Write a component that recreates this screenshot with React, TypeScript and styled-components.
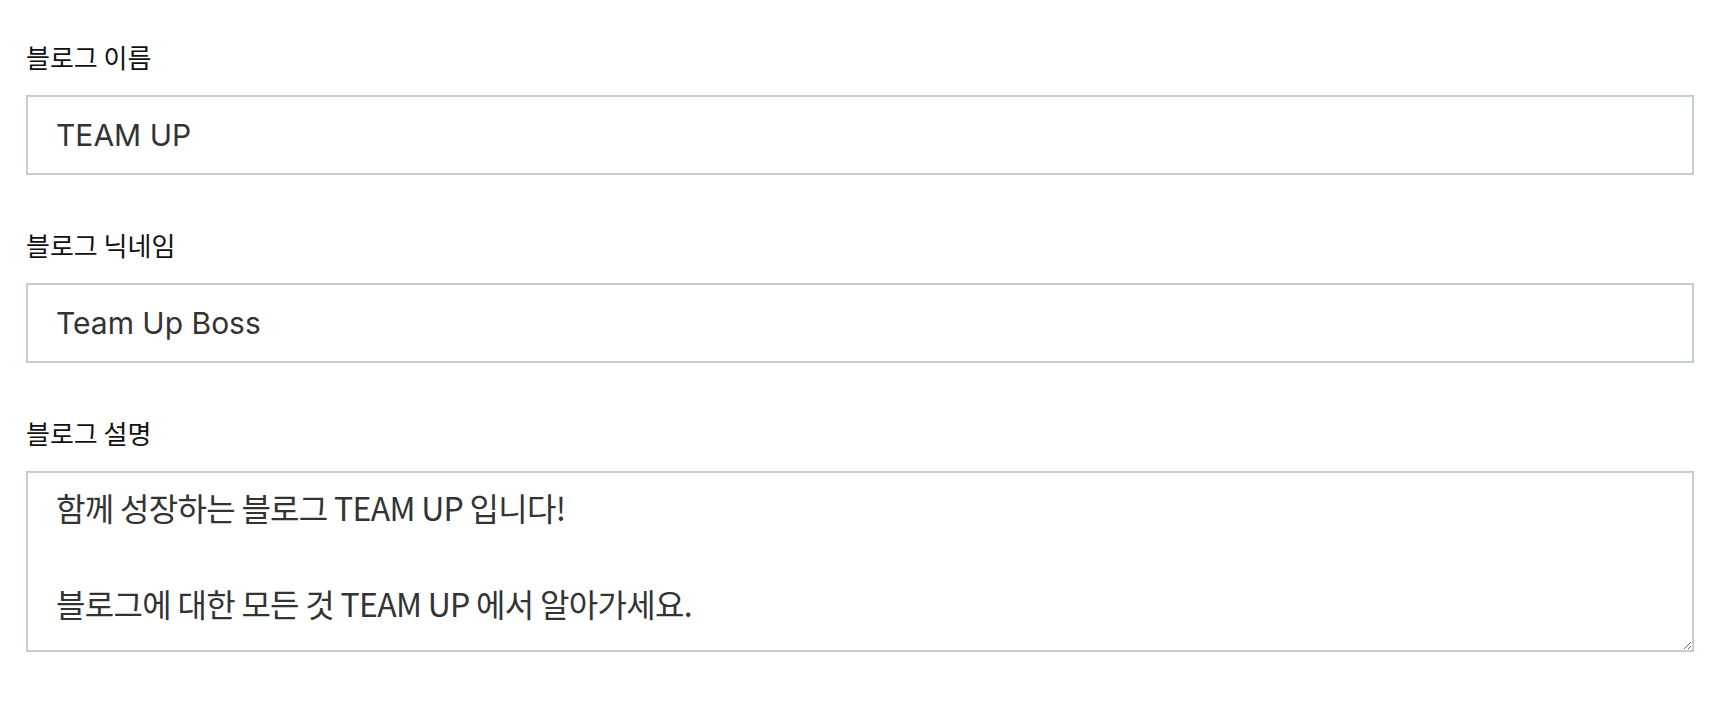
import styled, { createGlobalStyle } from "styled-components";

const GlobalStyle = createGlobalStyle`
  html, body {
    margin: 0;
    padding: 0;
    background: #ffffff;
  }
  body {
    font-family: "Noto Sans CJK KR", "Noto Sans", sans-serif;
  }
  * {
    box-sizing: border-box;
  }
`;

const Form = styled.form`
  display: flex;
  flex-direction: column;
  gap: 52px;
  padding: 39px 40px 40px 26px;
`;

const Field = styled.div`
  display: flex;
  flex-direction: column;
  gap: 20px;
`;

const Label = styled.label`
  font-family: "Noto Sans CJK KR", sans-serif;
  font-size: 26px;
  line-height: 36px;
  color: #111111;
`;

const TextInput = styled.input`
  width: 100%;
  height: 80px;
  padding: 0 28px;
  border: 2px solid #c6ccd7;
  border-radius: 0;
  outline: none;
  font-family: Inter, "Noto Sans CJK KR", sans-serif;
  font-size: 30px;
  color: #333333;
  background: #ffffff;
`;

const TextArea = styled.textarea`
  display: block;
  width: 100%;
  padding: 10px 28px 23px;
  border: 2px solid #c6ccd7;
  border-radius: 0;
  outline: none;
  font-family: "Noto Sans CJK KR", sans-serif;
  font-size: 32px;
  line-height: 48px;
  letter-spacing: -0.7px;
  color: #333333;
  background: #ffffff;
  resize: vertical;
`;

const fields = [
  { id: "name", label: "블로그 이름", value: "TEAM UP" },
  { id: "nickname", label: "블로그 닉네임", value: "Team Up Boss" },
];

const App = () => {
  return (
    <>
      <GlobalStyle />
      <Form onSubmit={(e) => e.preventDefault()}>
        {fields.map((f) => (
          <Field key={f.id}>
            <Label htmlFor={f.id}>{f.label}</Label>
            <TextInput id={f.id} defaultValue={f.value} />
          </Field>
        ))}
        <Field>
          <Label htmlFor="description">블로그 설명</Label>
          <TextArea
            id="description"
            rows={3}
            defaultValue={
              "함께 성장하는 블로그 TEAM UP 입니다!\n\n블로그에 대한 모든 것 TEAM UP 에서 알아가세요."
            }
          />
        </Field>
      </Form>
    </>
  );
};

export default App;
